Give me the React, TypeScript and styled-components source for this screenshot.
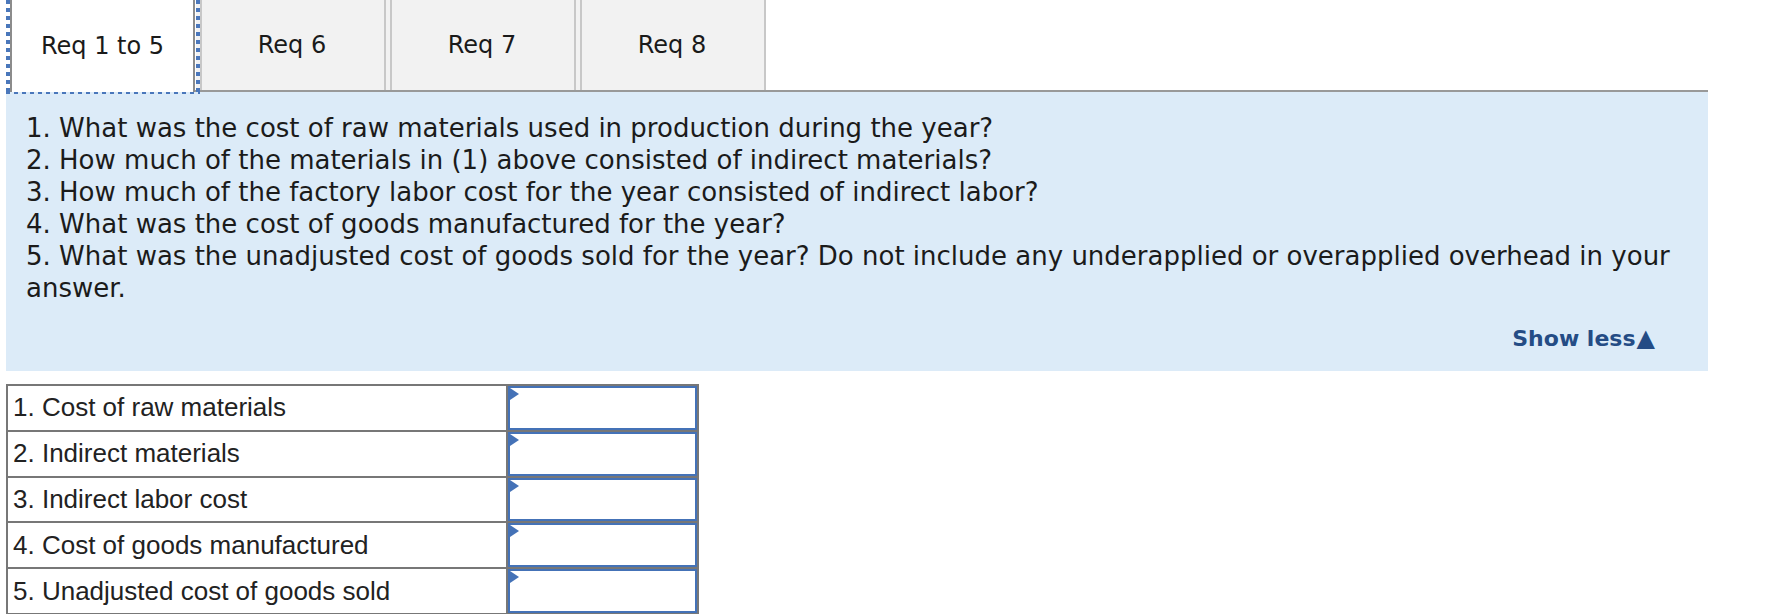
import React from "react";
import styled, { createGlobalStyle } from "styled-components";

const GlobalStyle = createGlobalStyle`
  body {
    margin: 0;
    background: #ffffff;
  }
`;

const focusBlue = "#4a77bb";
const inputBlue = "#4472b7";

const Page = styled.div`
  width: 1702px;
  padding-left: 6px;
`;

const TabList = styled.div`
  display: flex;
  height: 90px;
  padding-left: 4px;
  border-bottom: 2px solid #999999;
`;

const Tab = styled.div<{ $active?: boolean }>`
  position: relative;
  box-sizing: border-box;
  display: flex;
  align-items: center;
  justify-content: center;
  font-family: "DejaVu Sans", Verdana, sans-serif;
  font-size: 24px;
  color: #1a1a1a;
  cursor: pointer;
  ${({ $active }) =>
    $active
      ? `
    width: 185px;
    height: 92px;
    margin-right: 1px;
    background: #ffffff;
    border-left: 2px solid #8c8c8c;
    border-right: 2px solid #8c8c8c;
    z-index: 1;

    &::after {
      content: "";
      position: absolute;
      top: 0;
      left: -6px;
      right: -7px;
      bottom: -2px;
      pointer-events: none;
      background:
        repeating-linear-gradient(to bottom, ${focusBlue} 0 4px, transparent 4px 8px) left top / 4px 100% no-repeat,
        repeating-linear-gradient(to bottom, ${focusBlue} 0 4px, transparent 4px 8px) right top / 4px 100% no-repeat,
        repeating-linear-gradient(to right, ${focusBlue} 0 4px, transparent 4px 8px) left bottom / 100% 2px no-repeat;
    }
  `
      : `
    width: 190px;
    height: 90px;
    background: #f2f2f2;
    border-left: 4px solid #f2f2f2;
    border-right: 2px solid #c8c8c8;
    box-shadow: inset 2px 0 0 #c8c8c8;
  `}
`;

const Panel = styled.div`
  background: #dcebf8;
  padding: 20px 14px 16px 20px;
  font-family: "DejaVu Sans", Verdana, sans-serif;
  font-size: 26px;
  line-height: 32px;
  color: #1b1b1b;
`;

const Question = styled.div``;

const ShowLessRow = styled.div`
  display: flex;
  justify-content: flex-end;
  margin-top: 18px;
  padding-right: 39px;
`;

const ShowLess = styled.span`
  display: flex;
  align-items: baseline;
  gap: 1px;
  font-weight: bold;
  font-size: 22px;
  color: #244c85;
  cursor: pointer;
`;

const Caret = styled.span`
  font-size: 24px;
`;

const AnswerGrid = styled.div`
  display: grid;
  grid-template-columns: 500px 191px;
  grid-auto-rows: 45.8px;
  width: max-content;
  margin-top: 13px;
  border-top: 2px solid #777777;
  border-left: 2px solid #777777;
`;

const LabelCell = styled.div`
  display: flex;
  align-items: center;
  padding-left: 5px;
  border-right: 2px solid #777777;
  border-bottom: 2px solid #777777;
  font-family: "Liberation Sans", Arial, sans-serif;
  font-size: 26px;
  color: #222222;
`;

const InputCell = styled.div`
  position: relative;
  border-right: 2px solid #777777;
  border-bottom: 2px solid #777777;

  &::before {
    content: "";
    position: absolute;
    left: 2px;
    top: 2px;
    border-left: 9px solid ${inputBlue};
    border-top: 6px solid transparent;
    border-bottom: 6px solid transparent;
  }
`;

const AmountInput = styled.input`
  display: block;
  box-sizing: border-box;
  width: 100%;
  height: 100%;
  margin: 0;
  padding: 0 8px;
  border: 2px solid ${inputBlue};
  background: #ffffff;
  font-family: "Liberation Sans", Arial, sans-serif;
  font-size: 22px;
  text-align: right;
  outline: none;
`;

const tabs = ["Req 1 to 5", "Req 6", "Req 7", "Req 8"];

const questions = [
  "1. What was the cost of raw materials used in production during the year?",
  "2. How much of the materials in (1) above consisted of indirect materials?",
  "3. How much of the factory labor cost for the year consisted of indirect labor?",
  "4. What was the cost of goods manufactured for the year?",
  "5. What was the unadjusted cost of goods sold for the year? Do not include any underapplied or overapplied overhead in your answer.",
];

const answers = [
  "1. Cost of raw materials",
  "2. Indirect materials",
  "3. Indirect labor cost",
  "4. Cost of goods manufactured",
  "5. Unadjusted cost of goods sold",
];

const App: React.FC = () => {
  return (
    <Page>
      <GlobalStyle />
      <TabList>
        {tabs.map((t, i) => (
          <Tab key={t} $active={i === 0}>
            {t}
          </Tab>
        ))}
      </TabList>
      <Panel>
        {questions.map((q) => (
          <Question key={q}>{q}</Question>
        ))}
        <ShowLessRow>
          <ShowLess>
            Show less<Caret>▲</Caret>
          </ShowLess>
        </ShowLessRow>
      </Panel>
      <AnswerGrid>
        {answers.map((a) => (
          <React.Fragment key={a}>
            <LabelCell>{a}</LabelCell>
            <InputCell>
              <AmountInput type="text" />
            </InputCell>
          </React.Fragment>
        ))}
      </AnswerGrid>
    </Page>
  );
};

export default App;
